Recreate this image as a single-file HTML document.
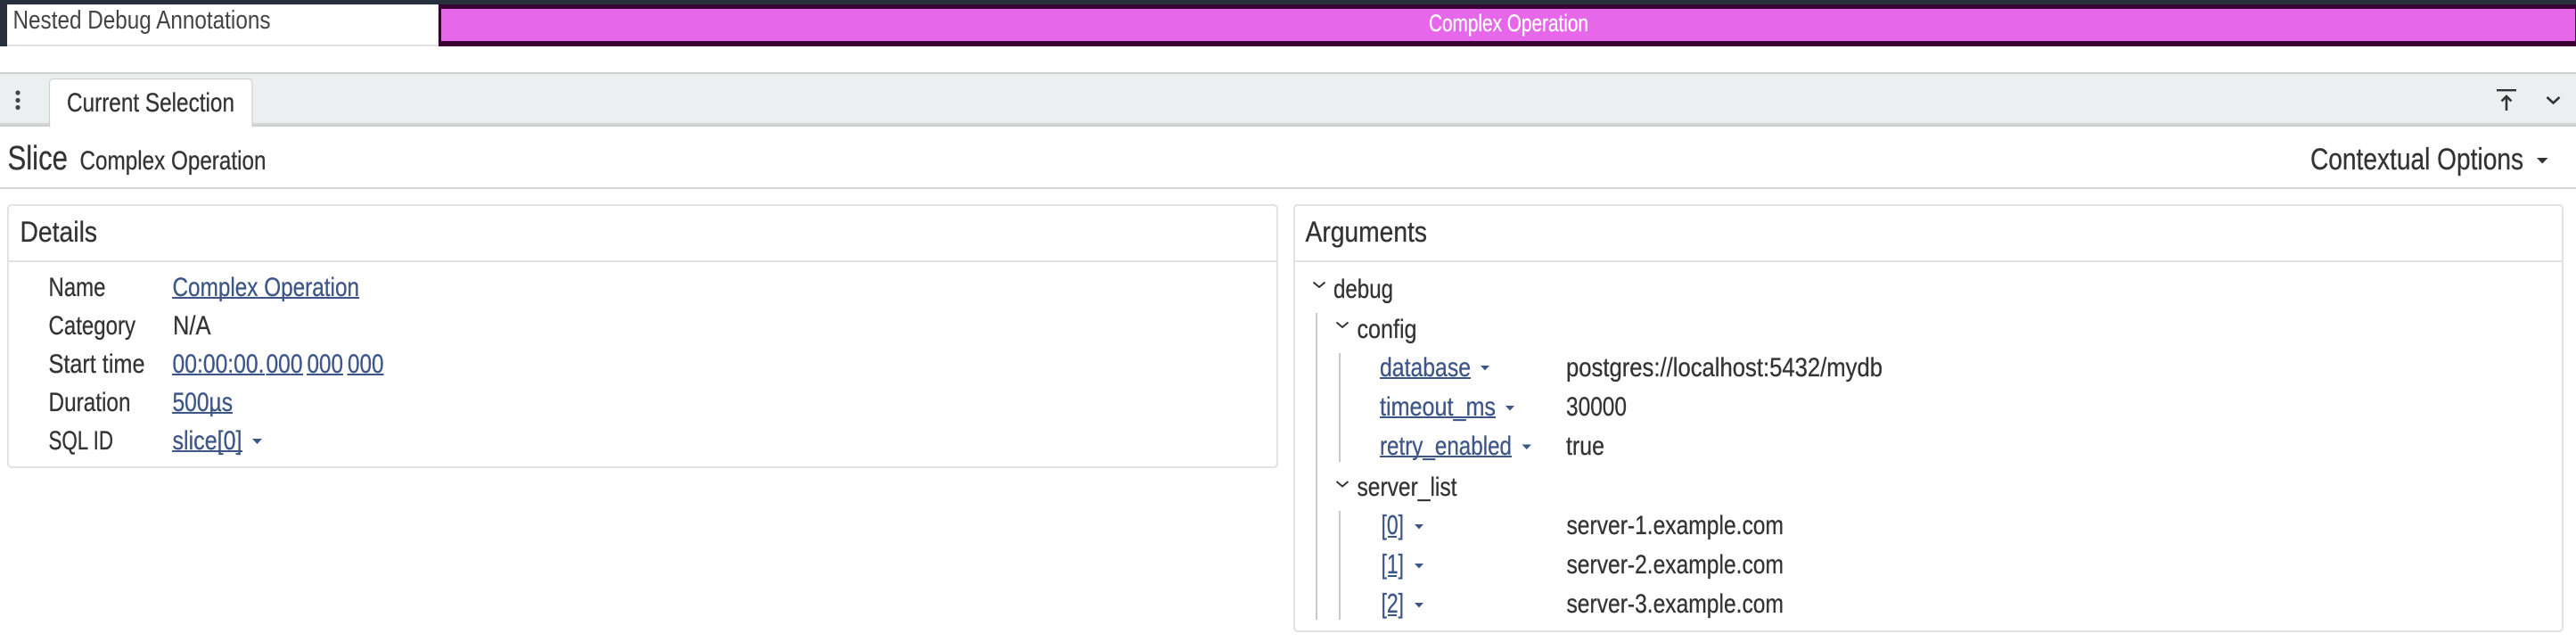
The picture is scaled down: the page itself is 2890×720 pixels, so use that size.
<!DOCTYPE html>
<html><head><meta charset="utf-8"><style>
html,body{margin:0;padding:0;background:#fff;width:2890px;height:720px;overflow:hidden}
svg{display:block}
text{font-family:"Liberation Sans Narrow","Liberation Sans",sans-serif;fill:#333;stroke:#333;stroke-width:.3px;font-size:30px}
.l{fill:#3d5688;stroke:#3d5688}
.t{font-size:32px}
</style></head><body>
<svg xmlns="http://www.w3.org/2000/svg" width="2890" height="720" viewBox="0 0 2890 720">
<defs><linearGradient id="sh" x1="0" y1="0" x2="0" y2="1"><stop offset="0" stop-color="#eceff0"/><stop offset="1" stop-color="#c8cacb"/></linearGradient></defs>
<rect x="0" y="0" width="2890" height="5" fill="#282f3c"/>
<rect x="0" y="0" width="8" height="52" fill="#282f3c"/>
<rect x="8" y="5" width="483" height="45" fill="#fff"/>
<rect x="8" y="50" width="484" height="2" fill="#e2e2e2"/>
<rect x="491" y="5" width="1" height="47" fill="#e2e2e2"/>
<rect x="492" y="5" width="2398" height="47" fill="#3a0033"/>
<rect x="495" y="10" width="2394" height="36" fill="#e667ea"/>
<text x="14.500" y="32" textLength="289" lengthAdjust="spacingAndGlyphs" style="fill:#444;stroke:none;font-size:29px">Nested Debug Annotations</text>
<text x="1603" y="35" textLength="179" lengthAdjust="spacingAndGlyphs" style="fill:#fff;stroke:#fff;font-size:27px">Complex Operation</text>

<rect x="0" y="81" width="2890" height="2" fill="#cfd1d1"/>
<rect x="0" y="83" width="2890" height="57" fill="#eceff0"/>
<rect x="0" y="137" width="2890" height="3" fill="url(#sh)"/>
<rect x="0" y="140" width="2890" height="2" fill="#cfd1d1"/>
<path d="M55.500 142V92.500a4 4 0 0 1 4-4h219.500a4 4 0 0 1 4 4V142z" fill="#fff" stroke="#cfd1d1" stroke-width="1.200"/>
<rect x="56.500" y="139" width="226" height="4" fill="#fff"/>
<text x="75" y="125" textLength="188" lengthAdjust="spacingAndGlyphs" style="font-size:30px">Current Selection</text>
<circle cx="20" cy="104" r="2.600" fill="#444"/><circle cx="20" cy="112.500" r="2.600" fill="#444"/><circle cx="20" cy="120.500" r="2.600" fill="#444"/>
<rect x="2801" y="100" width="22" height="2.400" fill="#333"/>
<path d="M2812 124V108M2806.500 113.500L2812 108L2817.500 113.500" fill="none" stroke="#333" stroke-width="2.600"/>
<path d="M2857.500 109L2864.500 115.500L2871.500 109" fill="none" stroke="#333" stroke-width="2.600"/>

<text x="8.500" y="190" textLength="67.500" lengthAdjust="spacingAndGlyphs" style="font-size:38px">Slice</text>
<text x="89.500" y="190" textLength="209" lengthAdjust="spacingAndGlyphs" style="font-size:30px">Complex Operation</text>
<text x="2592" y="190" textLength="239" lengthAdjust="spacingAndGlyphs" style="font-size:34px">Contextual Options</text>
<path d="M2846 177H2858.500L2852.250 183.500z" fill="#333"/>
<rect x="0" y="210" width="2890" height="2" fill="#d4d6d6"/>

<rect x="9" y="230" width="1424" height="294" rx="4" fill="#fff" stroke="#e2e2e2" stroke-width="2"/>
<rect x="9" y="292" width="1424" height="2" fill="#e2e2e2"/>
<text x="22.500" y="271" textLength="86.500" lengthAdjust="spacingAndGlyphs" class="t">Details</text>
<text x="54.500" y="332" textLength="64" lengthAdjust="spacingAndGlyphs">Name</text>
<text x="54.500" y="375" textLength="97.500" lengthAdjust="spacingAndGlyphs">Category</text>
<text x="54.500" y="418" textLength="108" lengthAdjust="spacingAndGlyphs">Start time</text>
<text x="54.500" y="461" textLength="92" lengthAdjust="spacingAndGlyphs">Duration</text>
<text x="54.500" y="504" textLength="72.500" lengthAdjust="spacingAndGlyphs">SQL ID</text>
<text x="193.500" y="332" textLength="209.500" lengthAdjust="spacingAndGlyphs" class="l">Complex Operation</text>
<rect x="193" y="333" width="210" height="2" fill="#3d5688"/>
<text x="194" y="375" textLength="42.500" lengthAdjust="spacingAndGlyphs">N/A</text>
<text x="193.500" y="418" textLength="103" lengthAdjust="spacingAndGlyphs" class="l">00:00:00.</text>
<text x="298.500" y="418" textLength="41" lengthAdjust="spacingAndGlyphs" class="l">000</text>
<text x="344.500" y="418" textLength="40.500" lengthAdjust="spacingAndGlyphs" class="l">000</text>
<text x="390" y="418" textLength="40.500" lengthAdjust="spacingAndGlyphs" class="l">000</text>
<rect x="193" y="419" width="104" height="2" fill="#3d5688"/><rect x="298.500" y="419" width="41.500" height="2" fill="#3d5688"/><rect x="344" y="419" width="41" height="2" fill="#3d5688"/><rect x="389.500" y="419" width="41" height="2" fill="#3d5688"/>
<text x="193.500" y="461" textLength="67.500" lengthAdjust="spacingAndGlyphs" class="l">500µs</text>
<rect x="193" y="462" width="68" height="2" fill="#3d5688"/>
<text x="193.500" y="504" textLength="78" lengthAdjust="spacingAndGlyphs" class="l">slice[0]</text>
<rect x="193" y="505" width="79" height="2" fill="#3d5688"/>
<path d="M283 492H294L288.500 498z" fill="#3d5688"/>

<rect x="1452" y="230" width="1423" height="478" rx="4" fill="#fff" stroke="#e2e2e2" stroke-width="2"/>
<rect x="1452" y="292" width="1423" height="2" fill="#e2e2e2"/>
<text x="1464.500" y="271" textLength="136.500" lengthAdjust="spacingAndGlyphs" class="t">Arguments</text>
<rect x="1476" y="351" width="2" height="344" fill="#c9c9c9"/>
<rect x="1502" y="396" width="2" height="122" fill="#c9c9c9"/>
<rect x="1502" y="573" width="2" height="122" fill="#c9c9c9"/>
<path d="M1473.500 316.500L1480 322L1486.500 316.500M1499.500 361.500L1506 367L1512.500 361.500M1499.500 540L1506 545.500L1512.500 540" fill="none" stroke="#333" stroke-width="2"/>
<text x="1496" y="334" textLength="67" lengthAdjust="spacingAndGlyphs">debug</text>
<text x="1522.500" y="379" textLength="67" lengthAdjust="spacingAndGlyphs">config</text>
<text x="1522.500" y="556" textLength="112" lengthAdjust="spacingAndGlyphs">server_list</text>
<text x="1548" y="422" textLength="102" lengthAdjust="spacingAndGlyphs" class="l">database</text>
<rect x="1548" y="423" width="102" height="2" fill="#3d5688"/>
<text x="1548" y="466" textLength="130" lengthAdjust="spacingAndGlyphs" class="l">timeout_ms</text>
<rect x="1548" y="467" width="130" height="2" fill="#3d5688"/>
<text x="1548" y="510" textLength="148" lengthAdjust="spacingAndGlyphs" class="l">retry_enabled</text>
<rect x="1548" y="511" width="148" height="2" fill="#3d5688"/>
<text x="1549.500" y="599" textLength="25.500" lengthAdjust="spacingAndGlyphs" class="l" style="font-size:31px">[0]</text>
<rect x="1557" y="601" width="10" height="2" fill="#3d5688"/>
<text x="1549.500" y="643" textLength="25.500" lengthAdjust="spacingAndGlyphs" class="l" style="font-size:31px">[1]</text>
<rect x="1557" y="645" width="10" height="2" fill="#3d5688"/>
<text x="1549.500" y="687" textLength="25.500" lengthAdjust="spacingAndGlyphs" class="l" style="font-size:31px">[2]</text>
<rect x="1557" y="689" width="10" height="2" fill="#3d5688"/>
<path d="M1661 410H1671L1666 415.500zM1689 455H1699L1694 460.500zM1707.500 498.500H1718L1712.750 504zM1587 588H1597L1592 593.500zM1587 632H1597L1592 637.500zM1587 676H1597L1592 681.500z" fill="#3d5688"/>
<text x="1757" y="422" textLength="355" lengthAdjust="spacingAndGlyphs">postgres://localhost:5432/mydb</text>
<text x="1757" y="466" textLength="68" lengthAdjust="spacingAndGlyphs">30000</text>
<text x="1757" y="510" textLength="43" lengthAdjust="spacingAndGlyphs">true</text>
<text x="1757.500" y="599" textLength="243.500" lengthAdjust="spacingAndGlyphs">server-1.example.com</text>
<text x="1757.500" y="643" textLength="243.500" lengthAdjust="spacingAndGlyphs">server-2.example.com</text>
<text x="1757.500" y="687" textLength="243.500" lengthAdjust="spacingAndGlyphs">server-3.example.com</text>
</svg>
</body></html>
